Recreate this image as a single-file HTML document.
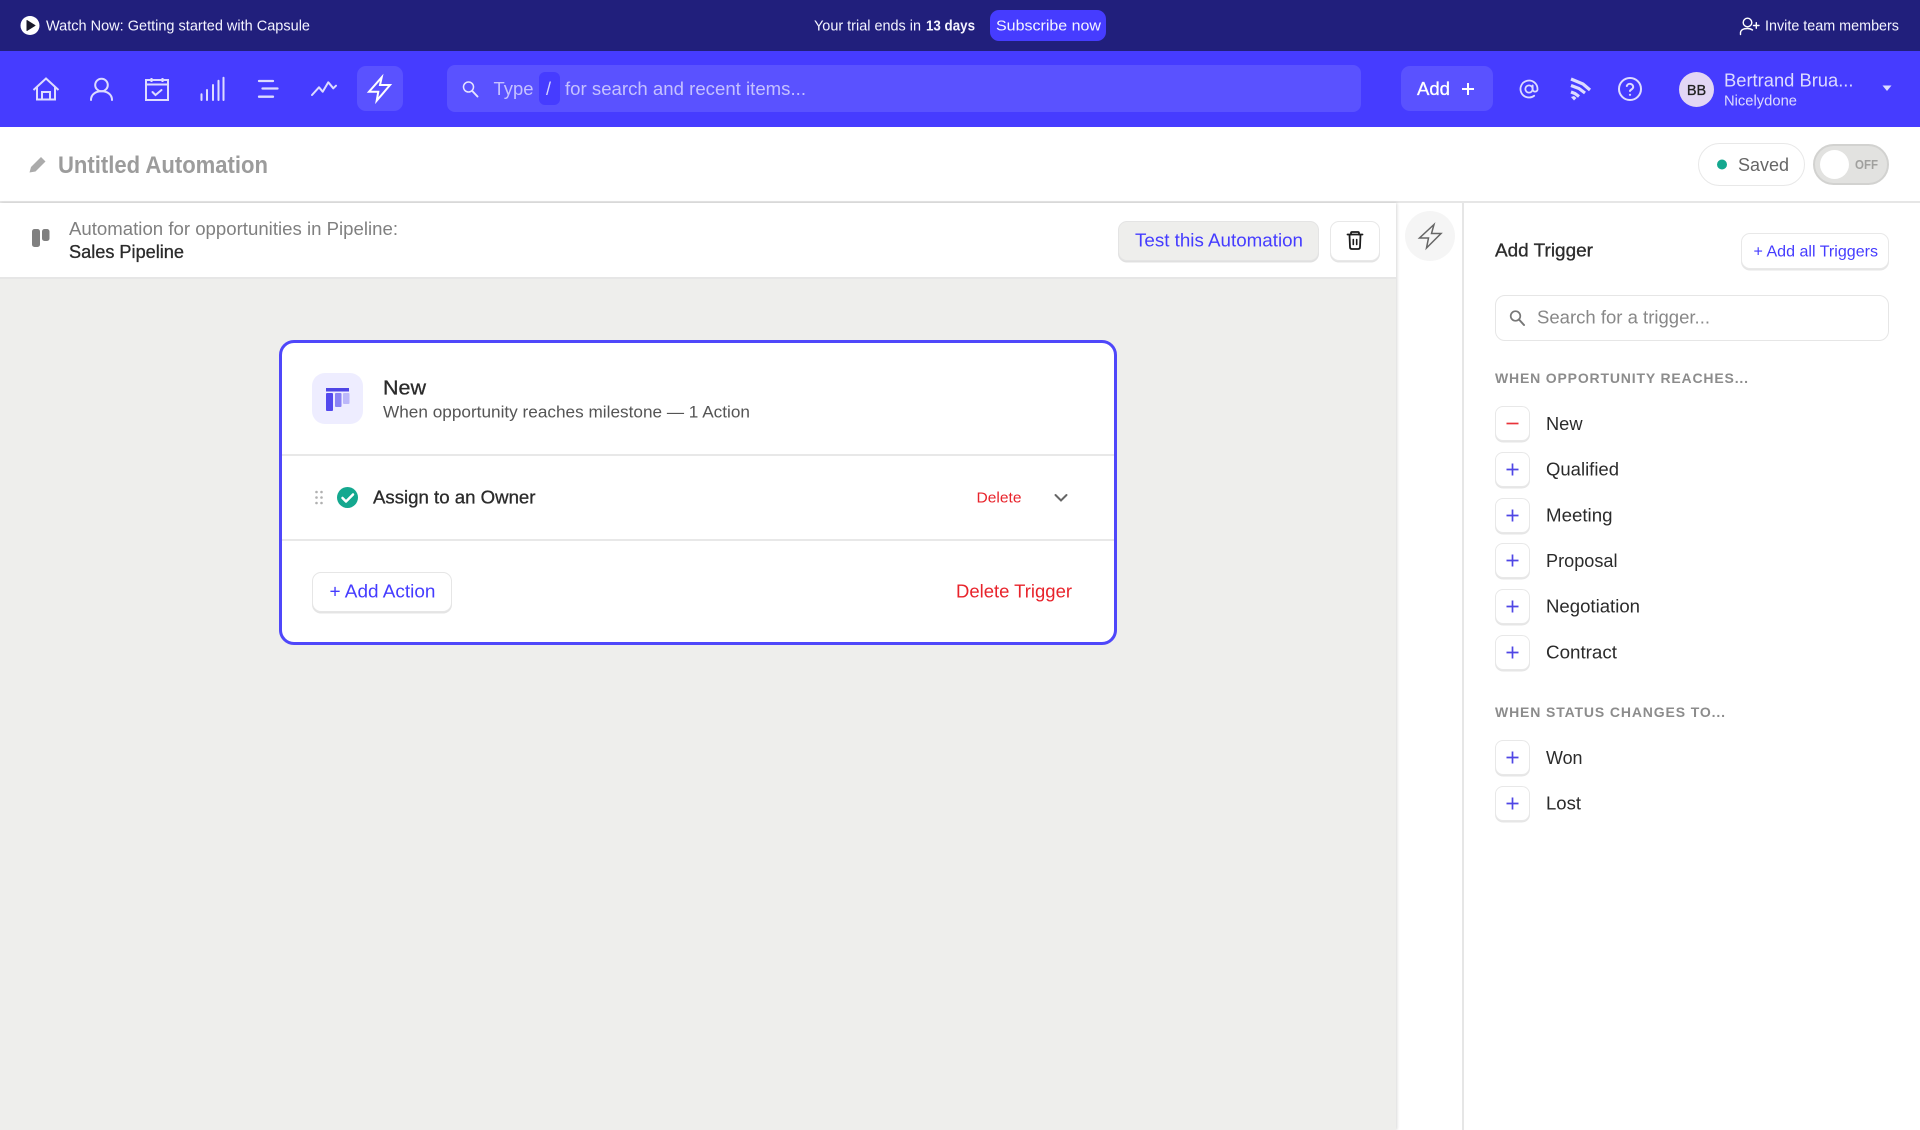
<!DOCTYPE html>
<html lang="en">
<head>
<meta charset="utf-8">
<title>Untitled Automation</title>
<style>
html,body{margin:0;padding:0;background:#fff}
body{position:relative;width:1920px;height:1130px;overflow:hidden;font-family:"Liberation Sans",sans-serif;filter:blur(.35px)}
.b{position:absolute;box-sizing:border-box}
svg{position:absolute;left:0;top:0}
text{font-family:"Liberation Sans",sans-serif}
.m{stroke-width:.3}
.row{left:1495px;width:35px;height:35px;background:#fff;border:1.5px solid #e8e8e8;border-radius:8px;box-shadow:0 1.5px 0 #e6e6e6}
</style>
</head>
<body>
<div class="b" style="left:0;top:0;width:1920px;height:51px;background:#211f7c"></div>
<div class="b" style="left:0;top:51px;width:1920px;height:76px;background:#463cff"></div>
<div class="b" style="left:990px;top:10px;width:116px;height:31px;background:#463cff;border-radius:9px"></div>
<div class="b" style="left:357px;top:66px;width:46px;height:45px;background:#5a52ff;border-radius:9px"></div>
<div class="b" style="left:447px;top:65px;width:914px;height:47px;background:#5a52ff;border-radius:8px"></div>
<div class="b" style="left:539px;top:72px;width:21px;height:33px;background:#463cff;border-radius:6px"></div>
<div class="b" style="left:1401px;top:66px;width:92px;height:45px;background:#5a52ff;border-radius:9px"></div>
<div class="b" style="left:1679px;top:72px;width:35px;height:35px;background:#e2d6f4;border-radius:50%"></div>

<div class="b" style="left:0;top:127px;width:1920px;height:76px;background:#fff;border-bottom:2px solid #e6e6e6"></div>
<div class="b" style="left:1698px;top:143px;width:107px;height:43px;background:#fff;border:1.5px solid #e8e8e8;border-radius:22px"></div>
<div class="b" style="left:1813px;top:144px;width:76px;height:41px;background:#e2e2e0;border:2px solid #d2d2d0;border-radius:21px"></div>
<div class="b" style="left:1820px;top:150px;width:29px;height:29px;background:#fff;border-radius:50%"></div>

<div class="b" style="left:0;top:203px;width:1396px;height:927px;background:#eeeeec;box-shadow:1px 0 3px rgba(0,0,0,.16)"></div>
<div class="b" style="left:0;top:203px;width:1396px;height:76px;background:#fff;border-bottom:2px solid #e6e6e6"></div>
<div class="b" style="left:1118px;top:221px;width:201px;height:40px;background:#eeeeec;border:1.5px solid #e4e4e4;border-radius:9px;box-shadow:0 1.5px 0 #e0e0e0"></div>
<div class="b" style="left:1330px;top:221px;width:50px;height:40px;background:#fff;border:1.5px solid #e8e8e8;border-radius:9px;box-shadow:0 1.5px 0 #e4e4e4"></div>

<div class="b" style="left:1462px;top:203px;width:2px;height:927px;background:#e6e6e6"></div>
<div class="b" style="left:1405px;top:211px;width:50px;height:50px;background:#f5f5f5;border-radius:50%"></div>
<div class="b" style="left:1741px;top:233px;width:148px;height:36px;background:#fff;border:1.5px solid #e8e8e8;border-radius:9px;box-shadow:0 1.5px 0 #e6e6e6"></div>
<div class="b" style="left:1495px;top:295px;width:394px;height:46px;background:#fff;border:1.5px solid #e6e6e6;border-radius:10px"></div>
<div class="b row" style="top:406px"></div>
<div class="b row" style="top:452px"></div>
<div class="b row" style="top:498px"></div>
<div class="b row" style="top:543px"></div>
<div class="b row" style="top:589px"></div>
<div class="b row" style="top:635px"></div>
<div class="b row" style="top:740px"></div>
<div class="b row" style="top:786px"></div>

<div class="b" style="left:279px;top:340px;width:838px;height:305px;background:#fff;border:3px solid #4f47fa;border-radius:15px"></div>
<div class="b" style="left:282px;top:454px;width:832px;height:2px;background:#e8e8e8"></div>
<div class="b" style="left:282px;top:539px;width:832px;height:2px;background:#e8e8e8"></div>
<div class="b" style="left:312px;top:373px;width:51px;height:51px;background:#eeedff;border-radius:13px"></div>
<div class="b" style="left:312px;top:572px;width:140px;height:40px;background:#fff;border:1.5px solid #e6e6e6;border-radius:9px;box-shadow:0 1.5px 0 #e4e4e4"></div>

<svg width="1920" height="1130" viewBox="0 0 1920 1130" xmlns="http://www.w3.org/2000/svg">
  <!-- top bar -->
  <circle cx="30" cy="25.500" r="9.500" fill="#fff"/>
  <path d="M27 20.500 L35 25.500 L27 30.500 Z" fill="#1a1a2a" stroke="#1a1a2a" stroke-width="1" stroke-linejoin="round"/>
  <text x="46" y="30.500" font-size="14.500" fill="#f4f4ff" textLength="264" lengthAdjust="spacingAndGlyphs">Watch Now: Getting started with Capsule</text>
  <text x="814" y="30.500" font-size="14.500" fill="#f4f4ff" textLength="107" lengthAdjust="spacingAndGlyphs">Your trial ends in</text>
  <text x="926" y="30.500" font-size="14.500" font-weight="700" fill="#f4f4ff" textLength="49" lengthAdjust="spacingAndGlyphs">13 days</text>
  <text x="996" y="30.500" font-size="15" fill="#f4f4ff" textLength="105" lengthAdjust="spacingAndGlyphs">Subscribe now</text>
  <g fill="none" stroke="#fff" stroke-width="1.400" stroke-linecap="round">
    <circle cx="1747.500" cy="22.500" r="4.300"/>
    <path d="M1740.500 34.500 V33 C1740.500 30 1743.500 28.500 1747.500 28.500 C1749.500 28.500 1751 29 1752.500 30"/>
    <path d="M1753.500 25.500 H1759 M1756.300 22.700 V28.300"/>
  </g>
  <text x="1765" y="30.500" font-size="14.500" fill="#f4f4ff" textLength="134" lengthAdjust="spacingAndGlyphs">Invite team members</text>

  <!-- nav icons -->
  <g fill="none" stroke="#dddbff" stroke-width="2" stroke-linejoin="miter">
    <path d="M33.500 90 L46 78.500 L58.500 90"/>
    <path d="M37 87 V99.500 H55 V87"/>
    <path d="M42 99.500 V92 H50 V99.500"/>
    <circle cx="101.500" cy="85" r="6.300"/>
    <path d="M91 100 C91 94 96 91.300 101.500 91.300 C107 91.300 112 94 112 100" stroke-linecap="round"/>
    <rect x="146" y="80" width="22" height="20"/>
    <path d="M146 84.500 H168 M151.500 78 V82 M162.500 78 V82"/>
    <path d="M152.500 92 L155.500 95 L161.500 90" stroke-linecap="round"/>
    <path d="M201.500 100 V94.300 M207 100 V90 M213 100 V85 M218.500 100 V80.700 M223.500 100 V77.700" stroke-linecap="round"/>
    <path d="M259 81 H273 M262.500 88.500 H277.500 M259 96.700 H273" stroke-linecap="round" stroke-width="2.300"/>
    <path d="M312 95 L319 87.300 L322.700 91.700 L328.300 82.300 L333.300 88.300 L336 85.700" stroke-linecap="round" stroke-linejoin="round"/>
  </g>
  <path d="M381.700 77.300 L369 91.700 H378.300 L376.700 100.700 L390 85 H380 Z" fill="none" stroke="#fff" stroke-width="2"/>

  <!-- search -->
  <circle cx="468.500" cy="87" r="5" fill="none" stroke="#e6e4ff" stroke-width="1.500"/>
  <path d="M472.300 91 L477.500 96.500" stroke="#e6e4ff" stroke-width="1.900" stroke-linecap="round"/>
  <text x="493.500" y="95" font-size="18.500" fill="#c5c1ff" textLength="40" lengthAdjust="spacingAndGlyphs">Type</text>
  <text x="546" y="95" font-size="18" fill="#d5d2ff">/</text>
  <text x="565" y="95" font-size="18.500" fill="#c5c1ff" textLength="241" lengthAdjust="spacingAndGlyphs">for search and recent items...</text>

  <!-- add + icons -->
  <text x="1417" y="95" font-size="18.500" fill="#fff" class="m" stroke="#fff" textLength="33" lengthAdjust="spacingAndGlyphs">Add</text>
  <path d="M1462 89 H1474 M1468 83 V95" stroke="#fff" stroke-width="2" fill="none"/>
  <g fill="none" stroke="#dddbff" stroke-width="2" stroke-linecap="round" stroke-linejoin="round">
    <g transform="translate(1518.800 78.800) scale(.85)" stroke-width="2.100">
      <circle cx="12" cy="12" r="4.300"/>
      <path d="M16.300 7.700v5.300a3 3 0 0 0 5.700 0v-1a10 10 0 1 0-3.920 7.940"/>
    </g>
    <circle cx="1630" cy="89" r="11"/>
    <path d="M1626.800 86 a3.300 3.300 0 0 1 6.400 1 c0 2.200-3.200 2.800-3.200 4"/>
    <path d="M1630 94.800 h.01" stroke-width="2.200"/>
  </g>
  <g fill="none" stroke="#dddbff" stroke-width="3.200">
    <path d="M1571 79 L1583 84 L1590 90"/>
    <path d="M1571 85.500 L1579 88.500 L1585 93"/>
    <path d="M1571 92 L1575 93.500 L1579 96.500"/>
  </g>
  <path d="M1571 97 L1574 96 L1576.500 98 L1574 100.500 Z" fill="#dddbff"/>
  <text x="1696.500" y="95" font-size="14.500" fill="#222" text-anchor="middle" class="m" stroke="#222">BB</text>
  <text x="1724" y="86.500" font-size="18.500" fill="#dddbff" textLength="129.500" lengthAdjust="spacingAndGlyphs">Bertrand Brua...</text>
  <text x="1724" y="105.500" font-size="14.500" fill="#dddbff" textLength="73" lengthAdjust="spacingAndGlyphs">Nicelydone</text>
  <path d="M1882.500 85.500 H1891.500 L1887 91 Z" fill="#dddbff"/>

  <!-- header -->
  <path d="M29.500 172.500 L31 167 L41 157 L45.500 161.500 L35.500 171.500 Z" fill="#ababab"/>
  <text x="58" y="173" font-size="24" font-weight="700" fill="#9c9c9c" textLength="210" lengthAdjust="spacingAndGlyphs">Untitled Automation</text>
  <circle cx="1722" cy="164.500" r="5" fill="#14a88f"/>
  <text x="1738" y="171" font-size="18.500" fill="#666" textLength="51" lengthAdjust="spacingAndGlyphs">Saved</text>
  <text x="1855" y="169" font-size="12.500" font-weight="700" fill="#a0a09e" textLength="23" lengthAdjust="spacingAndGlyphs">OFF</text>

  <!-- subheader -->
  <rect x="32" y="229" width="8" height="18" rx="2.500" fill="#808080"/>
  <rect x="42" y="229" width="7.500" height="12" rx="2.500" fill="#808080"/>
  <text x="69" y="235" font-size="18.500" fill="#808080" textLength="329" lengthAdjust="spacingAndGlyphs">Automation for opportunities in Pipeline:</text>
  <text x="69" y="258" font-size="18.500" fill="#2b2b2b" class="m" stroke="#2b2b2b" textLength="115" lengthAdjust="spacingAndGlyphs">Sales Pipeline</text>
  <text x="1135" y="246.500" font-size="18.500" fill="#453cff" textLength="168" lengthAdjust="spacingAndGlyphs">Test this Automation</text>
  <g fill="none" stroke="#1c1c1c" stroke-width="1.800" stroke-linejoin="round" stroke-linecap="round">
    <path d="M1347.500 234.500 H1362.500"/>
    <path d="M1351 234.500 V233 Q1351 232 1352 232 H1358 Q1359 232 1359 233 V234.500"/>
    <path d="M1349.500 235 L1350 247 Q1350 249 1352 249 H1358 Q1360 249 1360 247 L1360.500 235"/>
    <path d="M1353.300 239.500 V244.500 M1356.700 239.500 V244.500" stroke-width="1.600"/>
  </g>

  <!-- card -->
  <rect x="326" y="388" width="23" height="3.500" fill="#4f46e5"/>
  <rect x="326" y="393" width="7" height="18" rx="1" fill="#5349ee"/>
  <rect x="335" y="393" width="6.500" height="14" rx="1" fill="#8a83f4"/>
  <rect x="343" y="393" width="6.500" height="11" rx="1" fill="#bcb8fa"/>
  <text x="383" y="394.500" font-size="20.500" fill="#2b2b2b" class="m" stroke="#2b2b2b" textLength="43" lengthAdjust="spacingAndGlyphs">New</text>
  <text x="383" y="417.500" font-size="17" fill="#555" textLength="367" lengthAdjust="spacingAndGlyphs">When opportunity reaches milestone — 1 Action</text>
  <g fill="#b0b0b0">
    <circle cx="316.500" cy="492" r="1.300"/><circle cx="321.500" cy="492" r="1.300"/>
    <circle cx="316.500" cy="497.500" r="1.300"/><circle cx="321.500" cy="497.500" r="1.300"/>
    <circle cx="316.500" cy="503" r="1.300"/><circle cx="321.500" cy="503" r="1.300"/>
  </g>
  <circle cx="347.500" cy="497.500" r="10.500" fill="#14a88f"/>
  <path d="M342.500 498 L346 501.500 L353 494.500" fill="none" stroke="#fff" stroke-width="2.500" stroke-linecap="round" stroke-linejoin="round"/>
  <text x="373" y="503.500" font-size="18.500" fill="#2b2b2b" class="m" stroke="#2b2b2b" textLength="162.500" lengthAdjust="spacingAndGlyphs">Assign to an Owner</text>
  <text x="976.500" y="502.500" font-size="15" fill="#e8232b" textLength="45" lengthAdjust="spacingAndGlyphs">Delete</text>
  <path d="M1055.500 495 L1061 500.500 L1066.500 495" fill="none" stroke="#666" stroke-width="2" stroke-linecap="round"/>
  <text x="329.500" y="597.500" font-size="18.500" fill="#453cff" textLength="106" lengthAdjust="spacingAndGlyphs">+ Add Action</text>
  <text x="956" y="597.500" font-size="18.500" fill="#e8232b" textLength="116" lengthAdjust="spacingAndGlyphs">Delete Trigger</text>

  <!-- rail -->
  <path d="M1434 224.500 L1419.500 238 H1428.500 L1426.500 248 L1441 233.500 H1431.500 Z" fill="none" stroke="#666" stroke-width="1.500"/>

  <!-- trigger panel -->
  <text x="1495" y="256.500" font-size="18.500" fill="#2b2b2b" class="m" stroke="#2b2b2b" textLength="98" lengthAdjust="spacingAndGlyphs">Add Trigger</text>
  <text x="1753.500" y="256.500" font-size="16" fill="#453cff" textLength="124.500" lengthAdjust="spacingAndGlyphs">+ Add all Triggers</text>
  <circle cx="1515.500" cy="316" r="4.800" fill="none" stroke="#777" stroke-width="1.700"/>
  <path d="M1519 319.500 L1524 325" stroke="#777" stroke-width="2" stroke-linecap="round"/>
  <text x="1537" y="323.500" font-size="18.500" fill="#888" textLength="173" lengthAdjust="spacingAndGlyphs">Search for a trigger...</text>
  <text x="1495" y="383" font-size="14" font-weight="700" fill="#8c8c8c" textLength="253" lengthAdjust="spacing">WHEN OPPORTUNITY REACHES...</text>
  <text x="1495" y="717" font-size="14" font-weight="700" fill="#8c8c8c" textLength="230" lengthAdjust="spacing">WHEN STATUS CHANGES TO...</text>

  <path d="M1506.500 423.500 H1518.500" stroke="#e8333a" stroke-width="1.700"/>
  <g stroke="#4f46e5" stroke-width="1.700" fill="none">
    <path d="M1506.500 469.500 H1518.500 M1512.500 463.500 V475.500"/>
    <path d="M1506.500 515.500 H1518.500 M1512.500 509.500 V521.500"/>
    <path d="M1506.500 560.500 H1518.500 M1512.500 554.500 V566.500"/>
    <path d="M1506.500 606.500 H1518.500 M1512.500 600.500 V612.500"/>
    <path d="M1506.500 652.500 H1518.500 M1512.500 646.500 V658.500"/>
    <path d="M1506.500 757.500 H1518.500 M1512.500 751.500 V763.500"/>
    <path d="M1506.500 803.500 H1518.500 M1512.500 797.500 V809.500"/>
  </g>
  <g font-size="18.500" fill="#2b2b2b">
    <text x="1546" y="430" textLength="36.500" lengthAdjust="spacingAndGlyphs">New</text>
    <text x="1546" y="475.500" textLength="73" lengthAdjust="spacingAndGlyphs">Qualified</text>
    <text x="1546" y="521.500" textLength="66.500" lengthAdjust="spacingAndGlyphs">Meeting</text>
    <text x="1546" y="567" textLength="71.500" lengthAdjust="spacingAndGlyphs">Proposal</text>
    <text x="1546" y="612.500" textLength="94" lengthAdjust="spacingAndGlyphs">Negotiation</text>
    <text x="1546" y="658.500" textLength="71" lengthAdjust="spacingAndGlyphs">Contract</text>
    <text x="1546" y="764" textLength="36.500" lengthAdjust="spacingAndGlyphs">Won</text>
    <text x="1546" y="809.500" textLength="35" lengthAdjust="spacingAndGlyphs">Lost</text>
  </g>
</svg>
</body>
</html>
